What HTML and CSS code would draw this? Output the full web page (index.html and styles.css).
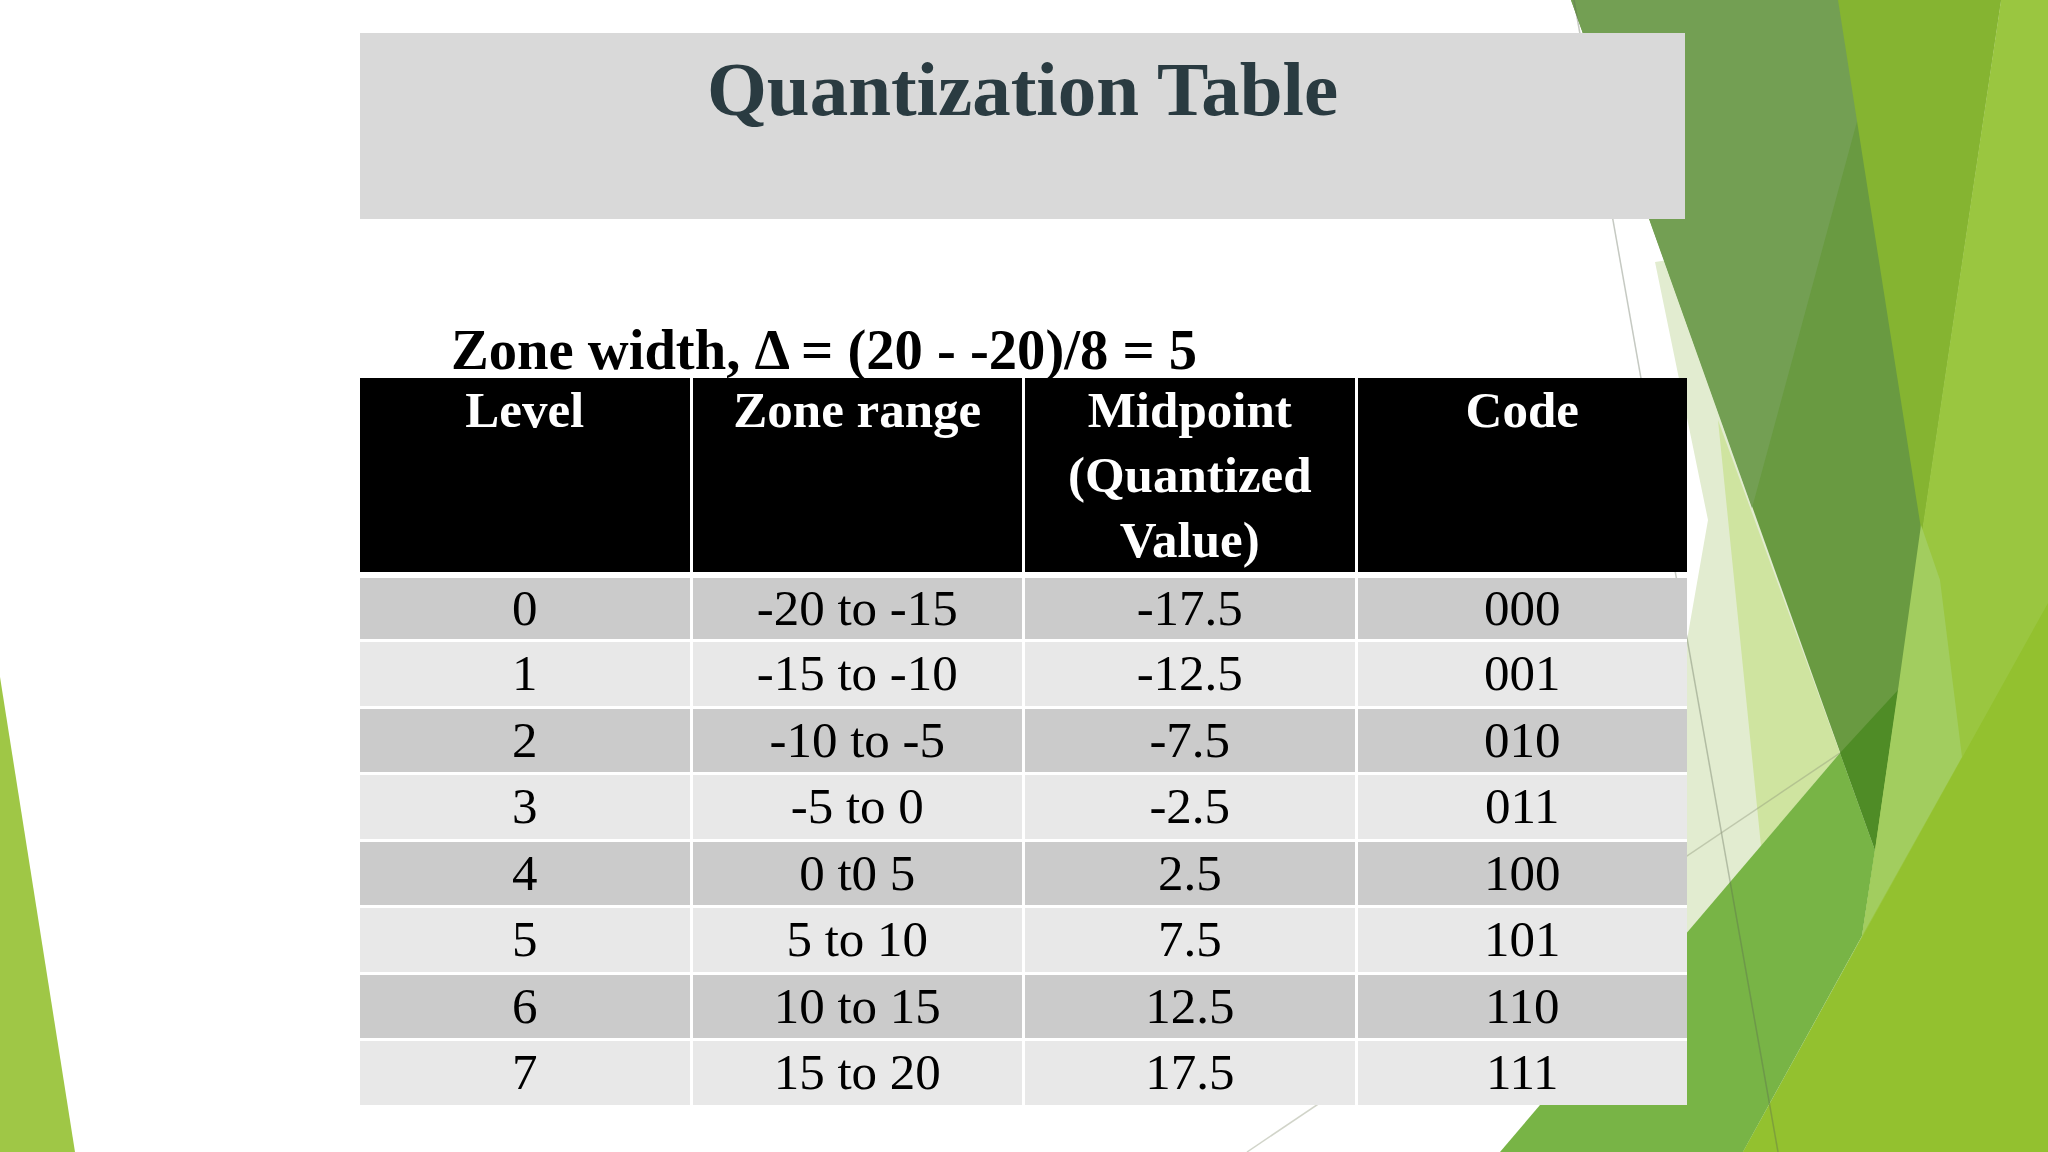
FILE: index.html
```html
<!DOCTYPE html>
<html lang="en">
<head>
<meta charset="utf-8">
<title>Quantization Table</title>
<link rel="stylesheet" href="styles.css">
</head>
<body>
<div class="slide">
  <svg class="bg" viewBox="0 0 2048 1152" width="2048" height="1152" aria-hidden="true">
    <polygon points="0,677 75,1152 0,1152" fill="#9fc746"/>
    <polygon points="1655,262 1708,520 1687,640 1687,960 1850,760 1700,255" fill="#e2ecd0"/>
    <polygon points="1571,0 2001,0 1875,850" fill="#699a41"/>
    <polygon points="1571,0 1890,0 1752,508" fill="#739f53"/>
    <polygon points="1838,0 2001,0 1922,535" fill="#85b431"/>
    <polygon points="2001,0 2048,0 2048,1152 1743,1152 1862,936" fill="#9ac640"/>
    <polygon points="1718,420 1761,846 1840,753" fill="#cfe4a0"/>
    <polygon points="1840,753 1875,850 1862,936 1743,1152 1500,1152" fill="#78b446"/>
    <polygon points="1840,753 1898,690 1875,850" fill="#4f8c26"/>
    <polygon points="1921,525 1940,580 1962,757 1862,936 1875,850 1898,690" fill="#a2cd5f"/>
    <polygon points="2048,603 2048,1152 1743,1152" fill="#93c12f"/>
    <line x1="1574" y1="0" x2="1778" y2="1152" stroke="#5a6450" stroke-opacity="0.35" stroke-width="1.5"/>
    <line x1="1247" y1="1152" x2="1840" y2="753" stroke="#8c9478" stroke-opacity="0.4" stroke-width="1.5"/>
  </svg>
  <div class="content">
    <div class="title-box">
      <h1 class="title">Quantization Table</h1>
    </div>
    <p class="subtitle">Zone width, Δ = (20 - -20)/8 = 5</p>
    <div class="qtable">
      <div class="thead">
        <div class="th">Level</div>
        <div class="th">Zone range</div>
        <div class="th">Midpoint<br>(Quantized<br>Value)</div>
        <div class="th">Code</div>
      </div>
      <div class="tbody">
        <div class="row dark"><div class="td">0</div><div class="td">-20 to -15</div><div class="td">-17.5</div><div class="td">000</div></div>
        <div class="row light"><div class="td">1</div><div class="td">-15 to -10</div><div class="td">-12.5</div><div class="td">001</div></div>
        <div class="row dark"><div class="td">2</div><div class="td">-10 to -5</div><div class="td">-7.5</div><div class="td">010</div></div>
        <div class="row light"><div class="td">3</div><div class="td">-5 to 0</div><div class="td">-2.5</div><div class="td">011</div></div>
        <div class="row dark"><div class="td">4</div><div class="td">0 t0 5</div><div class="td">2.5</div><div class="td">100</div></div>
        <div class="row light"><div class="td">5</div><div class="td">5 to 10</div><div class="td">7.5</div><div class="td">101</div></div>
        <div class="row dark"><div class="td">6</div><div class="td">10 to 15</div><div class="td">12.5</div><div class="td">110</div></div>
        <div class="row light"><div class="td">7</div><div class="td">15 to 20</div><div class="td">17.5</div><div class="td">111</div></div>
      </div>
    </div>
  </div>
</div>
</body>
</html>
```

FILE: styles.css
```css
html, body {
  margin: 0;
  padding: 0;
}

body {
  width: 2048px;
  height: 1152px;
  overflow: hidden;
  background: #ffffff;
  font-family: "Liberation Serif", "Times New Roman", serif;
  color: #000;
}

.slide {
  position: relative;
  width: 2048px;
  height: 1152px;
  overflow: hidden;
}

.bg {
  position: absolute;
  left: 0;
  top: 0;
  width: 2048px;
  height: 1152px;
  display: block;
}

.content {
  position: relative;
  width: 1327px;
  padding: 33px 0 0 360px;
}

.title-box {
  width: 1325px;
  height: 186px;
  box-sizing: border-box;
  padding-top: 11px;
  background: #d9d9d9;
}

.title {
  margin: 0;
  font-size: 77px;
  line-height: 90px;
  font-weight: 700;
  color: #2a3b41;
  text-align: center;
}

.subtitle {
  margin: 104px 0 0 91px;
  font-size: 56.6px;
  line-height: 55px;
  font-weight: 700;
  white-space: nowrap;
}

.qtable {
  width: 1327px;
}

.thead {
  display: grid;
  grid-template-columns: repeat(4, 1fr);
  column-gap: 3px;
  background: #ffffff;
}

.th {
  height: 194px;
  background: #000000;
  color: #ffffff;
  font-size: 51px;
  line-height: 65px;
  font-weight: 700;
  text-align: center;
}

.tbody {
  margin-top: 6px;
  display: grid;
  grid-template-columns: repeat(4, 1fr);
  grid-template-rows: 61px repeat(7, 63.5px);
  gap: 3px;
  background: #ffffff;
}

.row {
  display: contents;
}

.td {
  display: flex;
  align-items: center;
  justify-content: center;
  font-size: 51px;
  line-height: 1;
  white-space: nowrap;
}

.dark .td {
  background: #cbcbcb;
}

.light .td {
  background: #e8e8e8;
}
```
